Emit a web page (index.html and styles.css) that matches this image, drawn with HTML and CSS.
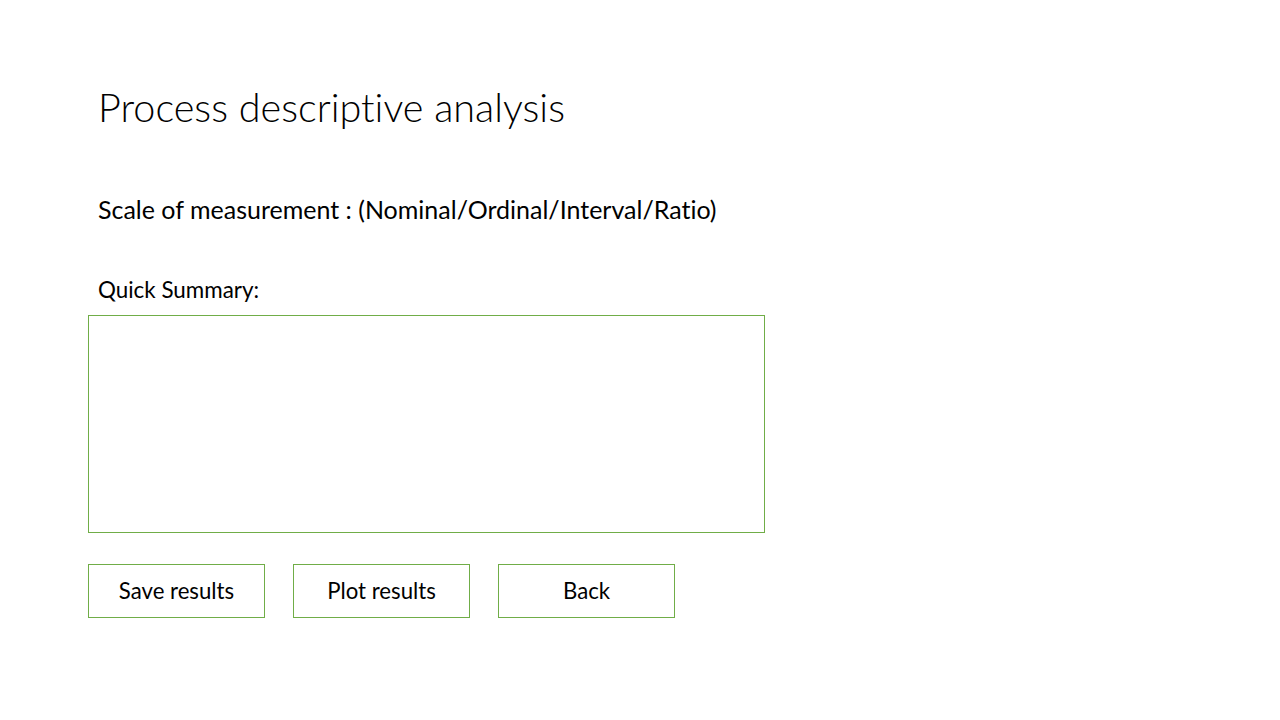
FILE: index.html
```html
<!DOCTYPE html>
<html>
<head>
<meta charset="utf-8">
<link rel="stylesheet" href="styles.css">
</head>
<body>
<main class="slide">
  <h1 class="title">Process descriptive analysis</h1>
  <p class="scale">Scale of measurement : (Nominal/Ordinal/Interval/Ratio)</p>
  <p class="label">Quick Summary:</p>
  <div class="summary"></div>
  <div class="actions">
    <button class="btn">Save results</button>
    <button class="btn">Plot results</button>
    <button class="btn">Back</button>
  </div>
</main>
</body>
</html>
```
FILE: styles.css
```css
html, body {
  margin: 0;
  padding: 0;
  background: #ffffff;
}
.slide {
  width: 1280px;
  height: 720px;
  box-sizing: border-box;
  padding: 0 0 0 88px;
  display: flex;
  flex-direction: column;
  font-family: "Lato", "Open Sans", sans-serif;
  font-variant-ligatures: none;
  color: #000;
}
.title {
  margin: 80px 0 0 10px;
  font-family: "Lato", sans-serif;
  font-weight: 300;
  font-size: 39.6px;
  line-height: 54px;
  letter-spacing: 0;
}
.scale {
  margin: 57px 0 0 10px;
  font-size: 25px;
  line-height: 36px;
}
.label {
  margin: 48px 0 0 10px;
  font-size: 22.4px;
  line-height: 30px;
}
.summary {
  margin-top: 10px;
  width: 677px;
  height: 218px;
  box-sizing: border-box;
  border: 1px solid #70ad47;
}
.actions {
  margin-top: 31px;
  display: flex;
  gap: 28px;
}
.btn {
  width: 177px;
  height: 54px;
  box-sizing: border-box;
  border: 1px solid #70ad47;
  background: #fff;
  font-family: "Lato", sans-serif;
  font-variant-ligatures: none;
  font-size: 22.2px;
  color: #000;
  padding: 0 0 2px 0;
  cursor: pointer;
}
```
